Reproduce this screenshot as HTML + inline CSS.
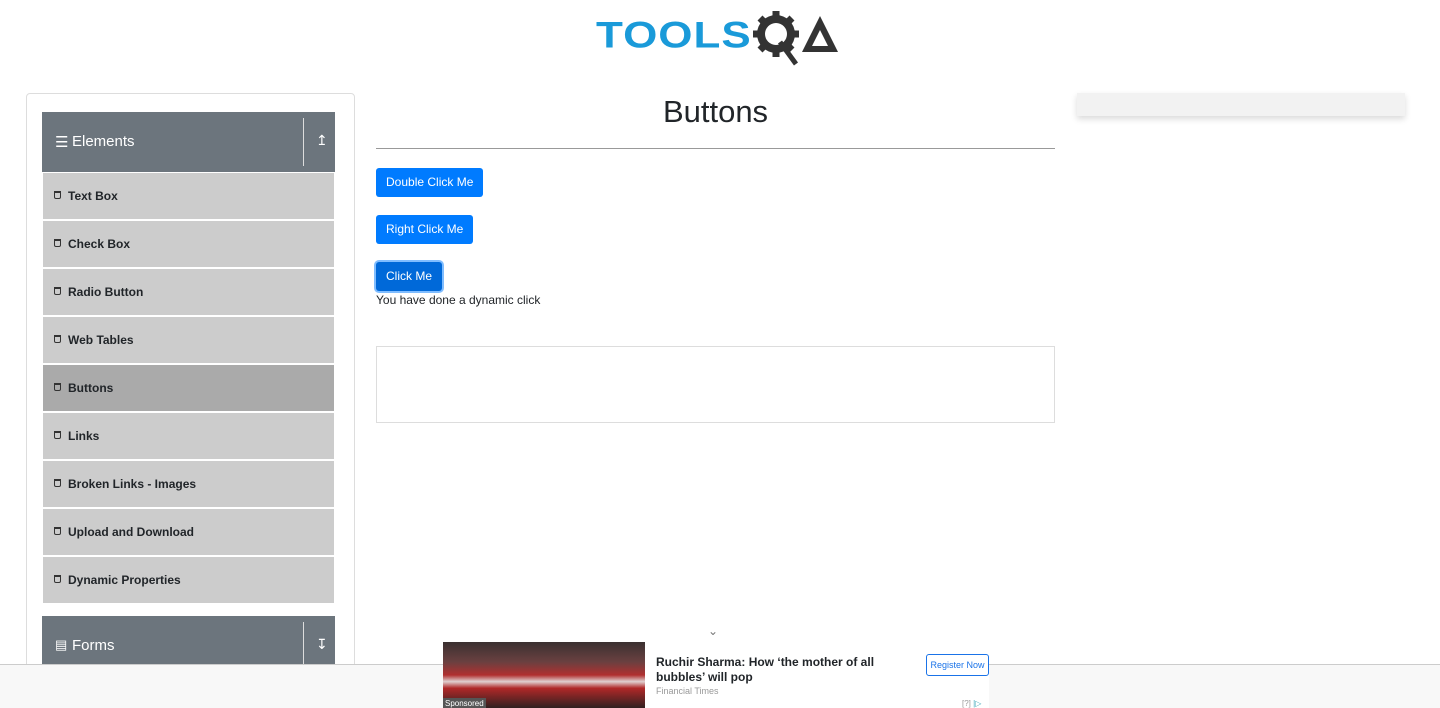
<!DOCTYPE html>
<html style="overflow:hidden;height:708px"><head><style>
body{margin:0;width:1440px;height:708px;overflow:hidden;background:#fff;font-family:"Liberation Sans",sans-serif;position:relative;color:#212529}
.a{position:absolute}
.card{left:26px;top:93px;width:327px;height:640px;border:1px solid #ddd;border-radius:4px}
.hdr{left:42px;width:293px;height:60px;background:#6c757d;color:#fff;font-size:15px}
.hdr .t{position:absolute;left:30px;top:21px}
.hdr .sep{position:absolute;left:261px;top:6px;width:1px;height:48px;background:#ddd}
.hdr .ar{position:absolute;left:274px;top:20px;font-size:14px}
.it{left:43px;width:291px;height:46px;background:#ccc;font-size:12px;font-weight:bold}
.it span{position:absolute;left:25px;top:16px}
.it i{position:absolute;left:11px;top:18px;width:7px;height:8px;border:1.5px solid #333;border-top-width:2px;box-sizing:border-box;border-radius:0 0 2px 2px}
.btn{left:376px;height:29px;background:#007bff;color:#fff;font-size:12px;border-radius:3px;line-height:29px;padding:0 10px;box-sizing:border-box}
</style></head><body>
<div class="a" style="left:596px;top:14px;font-size:44px;font-weight:bold;color:#1a9ad9;letter-spacing:1px;line-height:44px;transform:scaleY(0.85);transform-origin:top left;top:17px">TOOLS</div>
<svg class="a" style="left:750px;top:8px" width="90" height="60" viewBox="0 0 90 60"><g fill="#333"><circle cx="26" cy="26" r="19"/><g stroke="#333" stroke-width="7"><line x1="26" y1="3" x2="26" y2="49"/><line x1="3" y1="26" x2="49" y2="26"/><line x1="10" y1="10" x2="42" y2="42"/><line x1="42" y1="10" x2="10" y2="42"/></g><circle cx="26" cy="26" r="11" fill="#fff"/><line x1="30" y1="34" x2="46" y2="56" stroke="#333" stroke-width="5"/><path d="M52 44 L70 8 L88 44 Z M62 38 L78 38 L70 22 Z" fill-rule="evenodd"/></g></svg>
<div class="a card"></div>
<div class="a hdr" style="top:112px"><span class="a" style="left:13px;top:21px;font-size:15px">&#9776;</span><span class="t">Elements</span><div class="sep"></div><span class="ar">&#8613;</span></div>
<div class="a it" style="top:173px"><i></i><span>Text Box</span></div>
<div class="a it" style="top:221px"><i></i><span>Check Box</span></div>
<div class="a it" style="top:269px"><i></i><span>Radio Button</span></div>
<div class="a it" style="top:317px"><i></i><span>Web Tables</span></div>
<div class="a it" style="top:365px;background:#aaa"><i></i><span>Buttons</span></div>
<div class="a it" style="top:413px"><i></i><span>Links</span></div>
<div class="a it" style="top:461px"><i></i><span>Broken Links - Images</span></div>
<div class="a it" style="top:509px"><i></i><span>Upload and Download</span></div>
<div class="a it" style="top:557px"><i></i><span>Dynamic Properties</span></div>
<div class="a hdr" style="top:616px"><span class="a" style="left:13px;top:21px;font-size:13px">&#9636;</span><span class="t">Forms</span><div class="sep"></div><span class="ar">&#8615;</span></div>
<div class="a" style="left:376px;top:94px;width:679px;text-align:center;font-size:31px">Buttons</div>
<div class="a" style="left:376px;top:148px;width:679px;height:1px;background:#999"></div>
<div class="a btn" style="top:168px">Double Click Me</div>
<div class="a btn" style="top:215px">Right Click Me</div>
<div class="a btn" style="top:262px;background:#0069d9;box-shadow:0 0 0 2px #80bdff">Click Me</div>
<div class="a" style="left:376px;top:293px;font-size:12px">You have done a dynamic click</div>
<div class="a" style="left:376px;top:346px;width:677px;height:75px;border:1px solid #ddd"></div>
<div class="a" style="left:1077px;top:93px;width:328px;height:23px;background:#f2f2f2;box-shadow:0 3px 6px rgba(0,0,0,.15)"></div>
<div class="a" style="left:708px;top:624px;font-size:12px;color:#777">&#8964;</div>
<div class="a" style="left:0;top:664px;width:1440px;height:44px;background:#f8f8f8;border-top:1px solid #ccc"></div>
<div class="a" style="left:443px;top:642px;width:546px;height:66px;background:#fff"></div>
<div class="a" style="left:443px;top:642px;width:202px;height:66px;background:linear-gradient(#3a3030,#6a4040 30%,#b03030 50%,#e0d0d0 60%,#b02828 70%,#302020)"></div>
<div class="a" style="left:443px;top:698px;background:#555;color:#fff;font-size:8px;padding:1px 2px">Sponsored</div>
<div class="a" style="left:656px;top:655px;width:240px;font-size:12px;font-weight:bold;line-height:15px">Ruchir Sharma: How ‘the mother of all bubbles’ will pop</div>
<div class="a" style="left:656px;top:686px;font-size:9px;color:#999">Financial Times</div>
<div class="a" style="left:926px;top:654px;width:61px;height:20px;border:1px solid #1a73e8;border-radius:3px;font-size:9px;color:#1a73e8;text-align:center;line-height:20px">Register Now</div>
<div class="a" style="left:962px;top:699px;font-size:8px;color:#999">[?] <span style="color:#4ab">|▷</span></div>
</body></html>
